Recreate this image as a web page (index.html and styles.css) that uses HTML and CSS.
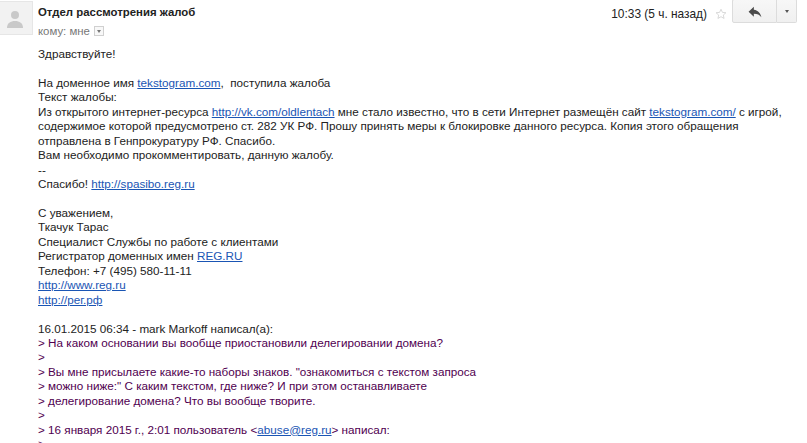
FILE: index.html
```html
<!DOCTYPE html>
<html lang="ru">
<head>
<meta charset="utf-8">
<title>Письмо</title>
<link rel="stylesheet" href="styles.css">
</head>
<body>
<div class="mail">
  <div class="avatar">
    <svg width="16" height="18" viewBox="0 0 16 18"><circle cx="8" cy="5" r="4" fill="#c9c9c9"/><path d="M0 18c0-5 3.5-7 8-7s8 2 8 7z" fill="#c9c9c9"/></svg>
  </div>
  <div class="main">
    <div class="head">
      <div class="who">
        <div class="name">Отдел рассмотрения жалоб</div>
        <div class="to">кому: мне <span class="tobox"><span class="tri"></span></span></div>
      </div>
      <div class="meta">
        <span class="time">10:33 (5 ч. назад)</span>
        <svg class="star" width="12" height="12" viewBox="0 0 24 24"><path d="M12 2.5l2.9 6.3 6.9.7-5.2 4.6 1.5 6.8L12 17.4l-6.1 3.5 1.5-6.8-5.2-4.6 6.9-.7z" fill="none" stroke="#cfcfcf" stroke-width="1.6"/></svg>
        <div class="btns">
          <div class="btn reply"><svg width="14" height="12" viewBox="0 0 24 20"><path d="M10 6V1L1 9.5 10 18v-5.2c6 0 10 1.8 13 6.2-1.2-6-5-12-13-13z" fill="#4a4a4a"/></svg></div>
          <div class="btn more"><span class="tri dark"></span></div>
        </div>
      </div>
    </div>
    <div class="body">
      <div>Здравствуйте!</div>
      <div class="blank"></div>
      <div>На доменное имя <a href="#">tekstogram.com</a>,&nbsp; поступила жалоба</div>
      <div>Текст жалобы:</div>
      <div>Из открытого интернет-ресурса <a href="#">http://vk.com/oldlentach</a> мне стало известно, что в сети Интернет размещён сайт <a href="#">tekstogram.com/</a> с игрой,</div>
      <div>содержимое которой предусмотрено ст. 282 УК РФ. Прошу принять меры к блокировке данного ресурса. Копия этого обращения</div>
      <div>отправлена в Генпрокуратуру РФ. Спасибо.</div>
      <div>Вам необходимо прокомментировать, данную жалобу.</div>
      <div>--</div>
      <div>Спасибо! <a href="#">http://spasibo.reg.ru</a></div>
      <div class="blank"></div>
      <div>С уважением,</div>
      <div>Ткачук Тарас</div>
      <div>Специалист Службы по работе с клиентами</div>
      <div>Регистратор доменных имен <a href="#">REG.RU</a></div>
      <div>Телефон: +7 (495) 580-11-11</div>
      <div><a href="#">http://www.reg.ru</a></div>
      <div><a href="#">http://рег.рф</a></div>
      <div class="blank"></div>
      <div>16.01.2015 06:34 - mark Markoff написал(а):</div>
      <div class="quote">
        <div>&gt; На каком основании вы вообще приостановили делегировании домена?</div>
        <div>&gt;</div>
        <div>&gt; Вы мне присылаете какие-то наборы знаков. "ознакомиться с текстом запроса</div>
        <div>&gt; можно ниже:" С каким текстом, где ниже? И при этом останавливаете</div>
        <div>&gt; делегирование домена? Что вы вообще творите.</div>
        <div>&gt;</div>
        <div>&gt; 16 января 2015 г., 2:01 пользователь &lt;<a href="#">abuse@reg.ru</a>&gt; написал:</div>
        <div>&gt;</div>
      </div>
    </div>
  </div>
</div>
</body>
</html>
```

FILE: styles.css
```css
html, body {
  margin: 0;
  padding: 0;
  background: #fff;
}
body {
  font-family: "Liberation Sans", Arial, sans-serif;
  color: #222;
  overflow: hidden;
  height: 443px;
}
.mail {
  display: flex;
  align-items: flex-start;
}
.avatar {
  width: 32px;
  height: 32px;
  margin-top: 1px;
  background: #f2f2f2;
  border: 1px solid #e6e6e6;
  border-left: none;
  display: flex;
  align-items: center;
  justify-content: center;
  flex: none;
}
.avatar svg {
  margin-left: -3px;
  margin-top: 2px;
}
.main {
  flex: 1;
  margin-left: 5px;
  margin-right: 10px;
}
.head {
  display: flex;
  justify-content: space-between;
  align-items: flex-start;
  height: 38px;
}
.who {
  padding-top: 5px;
}
.name {
  font-weight: bold;
  font-size: 11.4px;
  line-height: 15px;
  color: #222;
}
.to {
  margin-top: 4px;
  font-size: 11.4px;
  line-height: 14px;
  color: #777;
  display: flex;
  align-items: center;
  gap: 4px;
}
.tobox {
  width: 8px;
  height: 8px;
  border: 1px solid #d0d0d0;
  background: #f8f8f8;
  display: inline-flex;
  align-items: center;
  justify-content: center;
}
.tri {
  width: 0;
  height: 0;
  border-left: 2.5px solid transparent;
  border-right: 2.5px solid transparent;
  border-top: 3px solid #777;
}
.tri.dark {
  border-top-color: #555;
}
.meta {
  display: flex;
  align-items: flex-start;
}
.time {
  font-size: 11.9px;
  line-height: 14px;
  padding-top: 7px;
  color: #222;
}
.star {
  margin: 8px 5px 0 8px;
}
.btns {
  display: flex;
  height: 24px;
  margin-top: -1px;
}
.btn {
  height: 24px;
  border: 1px solid #dcdcdc;
  background: linear-gradient(#f7f7f7, #f0f0f0);
  display: flex;
  align-items: center;
  justify-content: center;
  box-sizing: border-box;
}
.reply {
  width: 45px;
  border-radius: 2px 0 0 2px;
}
.reply svg {
  margin-top: 2px;
}
.more {
  width: 20px;
  border-left: none;
  border-radius: 0 2px 2px 0;
}
.body {
  margin-top: 9px;
  font-size: 11.7px;
  line-height: 14.45px;
  white-space: nowrap;
}
.blank {
  height: 14.45px;
}
.body a {
  color: #1a55b4;
  text-decoration: underline;
}
.quote {
  color: #500050;
}
```
